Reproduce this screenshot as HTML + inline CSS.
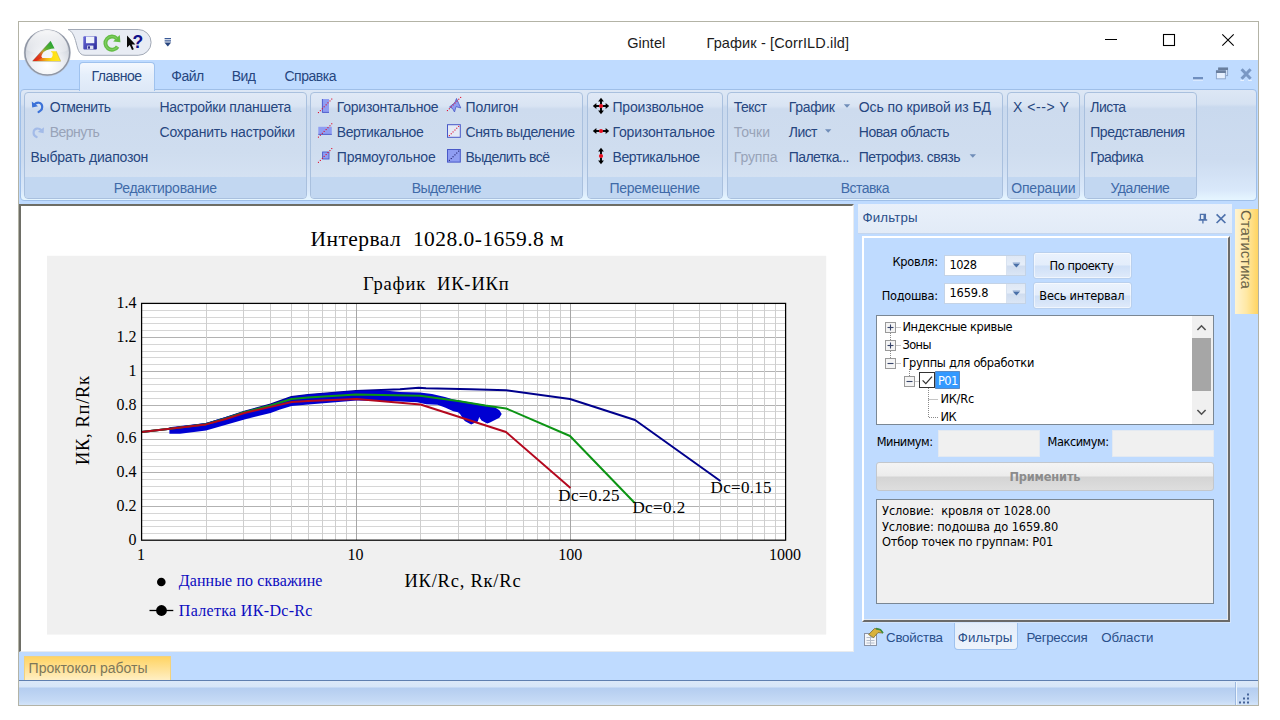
<!DOCTYPE html>
<html lang="ru">
<head>
<meta charset="utf-8">
<title>Gintel - График - [CorrILD.ild]</title>
<style>
html,body{margin:0;padding:0;background:#fff;}
body{width:1280px;height:720px;position:relative;overflow:hidden;font-family:"Liberation Sans",sans-serif;font-size:14px;}
div,span,svg{position:absolute;box-sizing:border-box;}
.t{white-space:pre;line-height:1;}
#win{left:18px;top:21px;width:1241px;height:685px;border:1px solid #b3b3a6;background:#bfdbff;}
#titlebar{left:19px;top:22px;width:1239px;height:38px;background:#fff;}
#tabstrip{left:19px;top:60px;width:1239px;height:30px;background:#bfdbff;}
#tab-main{left:79px;top:62px;width:76px;height:29px;border:1px solid #9fc2ee;border-bottom:none;border-radius:4px 4px 0 0;background:linear-gradient(#f4f8fe,#e6effb 40%,#dde8f7);}
#ribbon{left:20px;top:89px;width:1237px;height:112px;border:1px solid #9fbfe8;border-radius:4px;background:linear-gradient(#dde7f5 0,#d6e2f2 14px,#c9d9ee 17px,#cddcf0 70px,#d9e8fa 100px,#e6f6ff 110px);}
.grp{top:92px;height:107px;border:1px solid #a9c0de;border-radius:4px;background:linear-gradient(#e0e9f6 0,#d9e4f3 13px,#cddbee 16px,#cfddef 60px,#d4e1f2 84px);overflow:hidden;}
.grp i{position:absolute;left:0;right:0;bottom:0;height:21px;background:#c2d7f1;}
#mdi{left:19px;top:204px;width:835px;height:448px;background:#fff;border-left:2px solid #6e6e66;border-top:2px solid #6e6e66;border-right:2px solid #e9ecef;border-bottom:1px solid #e9ecef;}
#fhead{left:858px;top:204px;width:374px;height:30px;background:linear-gradient(#e9f0fa,#e2ebf7);border-bottom:1px solid #c5d6ee;}
#fbody{left:858px;top:234px;width:374px;height:418px;background:#bfdbff;}
#finner{left:862px;top:236px;width:368px;height:386px;border-top:2px solid #fff;border-left:2px solid #fff;border-right:2px solid #6a6a6a;border-bottom:2px solid #6a6a6a;background:#bfdbff;box-shadow:inset -1px -1px 0 #e6eaf0,1px 1px 0 #d3e4fb;}
.combo{background:#fff;border:1px solid #c4d3e6;}
.combo b{position:absolute;right:0;top:0;bottom:0;width:18px;background:linear-gradient(#dfe8f5,#e6eef9 48%,#cfdcef 52%,#dbe6f5);border-left:1px solid #d8e2f0;}
.btn{border:1px solid #b9d0ee;border-radius:3px;background:linear-gradient(#eaf2fd 0,#e3edfb 48%,#cfe0f7 52%,#dfeafa 100%);box-shadow:0 0 0 1px rgba(255,255,255,.55) inset;}
.edit{background:#f0f0f0;border:1px solid #e3e9f1;}
#tree{left:876px;top:315px;width:338px;height:110px;background:#fff;border:1px solid #7a8794;}
#sb{left:1192px;top:316px;width:21px;height:108px;background:#f0f0f0;}
#sbthumb{left:1192px;top:338px;width:19px;height:53px;background:#a6a6a6;}
#apply{left:876px;top:462px;width:338px;height:29px;border:1px solid #c3c7cc;border-radius:3px;background:linear-gradient(#f4f4f4 0,#ececec 48%,#d4d4d4 52%,#dedede 100%);}
#memo{left:876px;top:499px;width:338px;height:105px;background:#f0f0f0;border:1px solid #7a8794;}
#ftab{left:954px;top:623px;width:64px;height:27px;border:1px solid #9fc2ee;border-top:none;border-radius:0 0 4px 4px;background:linear-gradient(#e3edfa,#eef4fc);}
#stat{left:1235px;top:209px;width:23px;height:105px;background:linear-gradient(90deg,#fff4d2,#ffe8a4 50%,#ffd461);}
#stat span{left:2px;top:1px;transform-origin:0 0;transform:translate(17px,0) rotate(90deg);font-size:15px;color:#6a6348;white-space:pre;line-height:1;}
#ptab{left:24px;top:656px;width:147px;height:25px;background:linear-gradient(#ffd464,#ffe39a 55%,#fff0c8);border:1px solid #f3d27c;border-bottom:none;}
#status{left:19px;top:680px;width:1239px;height:25px;background:linear-gradient(#5f7fb0 0,#5f7fb0 1px,#dbe8f9 1px,#d6e5f8 7px,#b4cdf0 8px,#c4d9f5 20px,#d3e4f9 25px);}
#status i{position:absolute;left:1216px;top:2px;width:1px;height:23px;background:#9db9e0;box-shadow:1px 0 0 #eef5fd;}
</style>
</head>
<body>
<div id="win"></div>
<div id="titlebar"></div>
<div id="tabstrip"></div>
<div id="ribbon"></div>
<div id="tab-main"></div>
<div class="grp" style="left:24px;width:283px"><i></i></div>
<div class="grp" style="left:310px;width:273px"><i></i></div>
<div class="grp" style="left:587px;width:136px"><i></i></div>
<div class="grp" style="left:727px;width:276px"><i></i></div>
<div class="grp" style="left:1007px;width:73px"><i></i></div>
<div class="grp" style="left:1084px;width:113px"><i></i></div>
<div id="mdi"></div>
<svg id="chart" style="left:21px;top:206px" width="832" height="445" viewBox="21 206 832 445" font-family="'Liberation Serif', serif">
<rect x="21" y="206" width="832" height="445" fill="#fff"/>
<rect x="47" y="255.8" width="779.2" height="378.8" fill="#f0f0f0"/>
<rect x="141.6" y="303.4" width="644.0" height="236.80000000000007" fill="#fff"/>
<g stroke-width="1" fill="none" shape-rendering="crispEdges"><path d="M141.6 533.5H785.6" stroke="#d6d6d6"/><path d="M141.6 526.5H785.6" stroke="#d6d6d6"/><path d="M141.6 520.5H785.6" stroke="#d6d6d6"/><path d="M141.6 513.5H785.6" stroke="#d6d6d6"/><path d="M141.6 506.5H785.6" stroke="#b2b2b2"/><path d="M141.6 499.5H785.6" stroke="#d6d6d6"/><path d="M141.6 493.5H785.6" stroke="#d6d6d6"/><path d="M141.6 486.5H785.6" stroke="#d6d6d6"/><path d="M141.6 479.5H785.6" stroke="#d6d6d6"/><path d="M141.6 472.5H785.6" stroke="#b2b2b2"/><path d="M141.6 466.5H785.6" stroke="#d6d6d6"/><path d="M141.6 459.5H785.6" stroke="#d6d6d6"/><path d="M141.6 452.5H785.6" stroke="#d6d6d6"/><path d="M141.6 445.5H785.6" stroke="#d6d6d6"/><path d="M141.6 439.5H785.6" stroke="#b2b2b2"/><path d="M141.6 432.5H785.6" stroke="#d6d6d6"/><path d="M141.6 425.5H785.6" stroke="#d6d6d6"/><path d="M141.6 418.5H785.6" stroke="#d6d6d6"/><path d="M141.6 411.5H785.6" stroke="#d6d6d6"/><path d="M141.6 405.5H785.6" stroke="#b2b2b2"/><path d="M141.6 398.5H785.6" stroke="#d6d6d6"/><path d="M141.6 391.5H785.6" stroke="#d6d6d6"/><path d="M141.6 384.5H785.6" stroke="#d6d6d6"/><path d="M141.6 378.5H785.6" stroke="#d6d6d6"/><path d="M141.6 371.5H785.6" stroke="#b2b2b2"/><path d="M141.6 364.5H785.6" stroke="#d6d6d6"/><path d="M141.6 357.5H785.6" stroke="#d6d6d6"/><path d="M141.6 351.5H785.6" stroke="#d6d6d6"/><path d="M141.6 344.5H785.6" stroke="#d6d6d6"/><path d="M141.6 337.5H785.6" stroke="#b2b2b2"/><path d="M141.6 330.5H785.6" stroke="#d6d6d6"/><path d="M141.6 323.5H785.6" stroke="#d6d6d6"/><path d="M141.6 317.5H785.6" stroke="#d6d6d6"/><path d="M141.6 310.5H785.6" stroke="#d6d6d6"/><path d="M206.5 303.4V540.2" stroke="#cecece"/><path d="M243.5 303.4V540.2" stroke="#cecece"/><path d="M270.5 303.4V540.2" stroke="#cecece"/><path d="M291.5 303.4V540.2" stroke="#cecece"/><path d="M308.5 303.4V540.2" stroke="#cecece"/><path d="M322.5 303.4V540.2" stroke="#cecece"/><path d="M335.5 303.4V540.2" stroke="#cecece"/><path d="M346.5 303.4V540.2" stroke="#cecece"/><path d="M356.5 303.4V540.2" stroke="#a6a6a6"/><path d="M420.5 303.4V540.2" stroke="#cecece"/><path d="M458.5 303.4V540.2" stroke="#cecece"/><path d="M485.5 303.4V540.2" stroke="#cecece"/><path d="M506.5 303.4V540.2" stroke="#cecece"/><path d="M523.5 303.4V540.2" stroke="#cecece"/><path d="M537.5 303.4V540.2" stroke="#cecece"/><path d="M549.5 303.4V540.2" stroke="#cecece"/><path d="M560.5 303.4V540.2" stroke="#cecece"/><path d="M570.5 303.4V540.2" stroke="#a6a6a6"/><path d="M635.5 303.4V540.2" stroke="#cecece"/><path d="M673.5 303.4V540.2" stroke="#cecece"/><path d="M699.5 303.4V540.2" stroke="#cecece"/><path d="M720.5 303.4V540.2" stroke="#cecece"/><path d="M737.5 303.4V540.2" stroke="#cecece"/><path d="M752.5 303.4V540.2" stroke="#cecece"/><path d="M764.5 303.4V540.2" stroke="#cecece"/><path d="M775.5 303.4V540.2" stroke="#cecece"/></g>
<polyline fill="none" stroke="#00008c" stroke-width="2.0" stroke-linejoin="round" opacity="1" points="141.5,432 170,428.75 206,424 225,418.2 244.4,411.6 270.6,404.4 291.5,397 308,395 356,391 400,389.2 418.7,387.8 426,388.3 471,389.2 506,390.2 570,399 635,420 720.4,481"/>
<polygon fill="#0000d2" points="169.4,427.25 206,423 244.4,411.25 270.6,404.4 291.5,396.8 308.4,394.6 356.5,390.8 385,390.5 400,392 420,392.5 432,394 445,397 453.4,399.5 493.7,406.5 499.4,410.3 501.7,414 499.4,417.8 490,422.5 487.2,423.4 481.5,420.6 479.2,416.9 477.8,421.5 471.2,424.4 464.7,421 460,414 458,412.2 453.4,411.2 445,407.5 437.5,404.7 426.2,404.2 417,402.3 400,401.4 356.5,400.6 308.4,404.5 291.5,406 280,409.4 270.6,413 244.4,419.4 206,430.6 180,433.75 169.4,433.75"/>
<polyline fill="none" stroke="#0c9414" stroke-width="2.0" stroke-linejoin="round" opacity="1" points="141.5,432 170,428.75 206,424.2 225,418.6 244.4,412.2 270.6,405.4 291.5,399 308,397.5 356,394.6 420,395.7 458,401 485.3,405.6 506,408.4 570,436 634.5,502.7"/>
<polyline fill="none" stroke="#b4081e" stroke-width="2.0" stroke-linejoin="round" opacity="1" points="141.5,432 170,428.75 206,424.4 225,419.2 244.4,413 270.6,406.9 291.9,402 308,401 356.5,399 400,402.8 420.5,404.5 506,432 570.5,488"/>
<rect x="141.6" y="303.4" width="644.0" height="236.80000000000007" fill="none" stroke="#000" stroke-width="1.25"/>
<text x="310.5" y="245.5" font-size="21.5" text-anchor="start" fill="#000" xml:space="preserve" textLength="253.2" lengthAdjust="spacing">Интервал  1028.0-1659.8 м</text>
<text x="363" y="289.5" font-size="18.5" text-anchor="start" fill="#000" xml:space="preserve" textLength="145.7" lengthAdjust="spacing">График  ИК-ИКп</text>
<text x="136.5" y="308.0" font-size="16" text-anchor="end" fill="#000" xml:space="preserve">1.4</text>
<text x="136.5" y="341.8" font-size="16" text-anchor="end" fill="#000" xml:space="preserve">1.2</text>
<text x="136.5" y="375.7" font-size="16" text-anchor="end" fill="#000" xml:space="preserve">1</text>
<text x="136.5" y="409.5" font-size="16" text-anchor="end" fill="#000" xml:space="preserve">0.8</text>
<text x="136.5" y="443.3" font-size="16" text-anchor="end" fill="#000" xml:space="preserve">0.6</text>
<text x="136.5" y="477.1" font-size="16" text-anchor="end" fill="#000" xml:space="preserve">0.4</text>
<text x="136.5" y="511.0" font-size="16" text-anchor="end" fill="#000" xml:space="preserve">0.2</text>
<text x="136.5" y="544.8" font-size="16" text-anchor="end" fill="#000" xml:space="preserve">0</text>
<text x="140.9" y="560" font-size="16" text-anchor="middle" fill="#000" xml:space="preserve">1</text>
<text x="355.6" y="560" font-size="16" text-anchor="middle" fill="#000" xml:space="preserve">10</text>
<text x="570.2" y="560" font-size="16" text-anchor="middle" fill="#000" xml:space="preserve">100</text>
<text x="784.9" y="560" font-size="16" text-anchor="middle" fill="#000" xml:space="preserve">1000</text>
<text x="404.4" y="586.7" font-size="18.5" text-anchor="start" fill="#000" xml:space="preserve" textLength="116.2" lengthAdjust="spacing">ИК/Rc, Rк/Rc</text>
<text transform="translate(88.6,465) rotate(-90)" font-size="18.5" fill="#000" textLength="89" lengthAdjust="spacing">ИК, Rп/Rк</text>
<text x="558.3" y="500.6" font-size="17" text-anchor="start" fill="#000" xml:space="preserve" textLength="61.3" lengthAdjust="spacing">Dc=0.25</text>
<text x="632.4" y="513.2" font-size="17" text-anchor="start" fill="#000" xml:space="preserve" textLength="52.8" lengthAdjust="spacing">Dc=0.2</text>
<text x="710.6" y="493" font-size="17" text-anchor="start" fill="#000" xml:space="preserve" textLength="61.0" lengthAdjust="spacing">Dc=0.15</text>
<circle cx="161.3" cy="582" r="4.3" fill="#000"/>
<text x="178.75" y="586.3" font-size="16" text-anchor="start" fill="#0c0cc0" xml:space="preserve" textLength="143.7" lengthAdjust="spacing">Данные по скважине</text>
<path d="M149.5 610.5H173.3" stroke="#000" stroke-width="1.3"/><circle cx="161.5" cy="610.5" r="5.4" fill="#000"/>
<text x="178.75" y="615.5" font-size="16" text-anchor="start" fill="#0c0cc0" xml:space="preserve" textLength="133.7" lengthAdjust="spacing">Палетка ИК-Dc-Rc</text>
</svg>
<div id="fhead"></div>
<div id="fbody"></div>
<div id="finner"></div>
<div class="combo" style="left:944px;top:255px;width:82px;height:21px"><b></b></div>
<div class="combo" style="left:944px;top:283px;width:82px;height:21px"><b></b></div>
<div class="btn" style="left:1033px;top:252px;width:99px;height:27px"></div>
<div class="btn" style="left:1033px;top:282px;width:99px;height:27px"></div>
<div id="tree"></div>
<div id="sb"></div>
<div id="sbthumb"></div>
<div class="edit" style="left:938px;top:430px;width:102px;height:27px"></div>
<div class="edit" style="left:1112px;top:430px;width:102px;height:27px"></div>
<div id="apply"></div>
<div id="memo"></div>
<div id="ftab"></div>
<div id="stat"><span>Статистика</span></div>
<div id="ptab"></div>
<div id="status"><i></i></div>
<svg id="icons" style="left:0;top:0" width="1280" height="720" viewBox="0 0 1280 720">
<defs>
<radialGradient id="abg" cx="50%" cy="78%" r="75%"><stop offset="0" stop-color="#ffffff"/><stop offset="0.45" stop-color="#eef0f4"/><stop offset="0.75" stop-color="#d4d8e0"/><stop offset="1" stop-color="#c3c8d2"/></radialGradient>
<linearGradient id="abtop" x1="0" y1="0" x2="0" y2="1"><stop offset="0" stop-color="#fff" stop-opacity=".9"/><stop offset="1" stop-color="#fff" stop-opacity=".15"/></linearGradient>
<linearGradient id="lg1" x1="0" y1="1" x2="1" y2="0"><stop offset="0" stop-color="#e02010"/><stop offset="0.3" stop-color="#e04020"/><stop offset="0.48" stop-color="#c0a030"/><stop offset="0.6" stop-color="#60b030"/><stop offset="1" stop-color="#10a038"/></linearGradient>
<linearGradient id="lg2" x1="0" y1="0" x2="1" y2="0"><stop offset="0" stop-color="#e23818"/><stop offset="0.4" stop-color="#f0b018"/><stop offset="0.65" stop-color="#ffe010"/><stop offset="1" stop-color="#ffe628"/></linearGradient>
<linearGradient id="sv" x1="0" y1="0" x2="1" y2="1"><stop offset="0" stop-color="#6a6ad8"/><stop offset="1" stop-color="#2a2a98"/></linearGradient>
</defs>
<path d="M68 29.5H138.2a12.9 12.9 0 0 1 0 25.8H85C78 55.3 77.5 47 75.5 40.5C74 35.5 72 31 68 29.5Z" fill="#e8ecf4" stroke="#a2a9b6" stroke-width="1"/>
<circle cx="47.3" cy="52.9" r="23.6" fill="#bcc2cd" opacity=".6"/>
<circle cx="47.3" cy="52.6" r="22.4" fill="url(#abg)" stroke="#8f96a4" stroke-width="1.5"/>
<path d="M27 50a20.3 20.3 0 0 1 40.6 0C60 55 35 55 27 50Z" fill="url(#abtop)"/>
<path d="M32.6 61L50.7 41L54.6 48.4C51 48.2 47 49.6 44.4 51.4C42.6 52.8 41.6 54.6 41.4 56.8L42.6 58.2L43 61Z" fill="url(#lg1)"/>
<path d="M41.6 58H51.3L52.6 56V52.7L51.1 52V51.2H56.3L60.7 61.1H36Z" fill="url(#lg2)"/>
<path d="M32.4 61.2L50.6 41" stroke="#5a5a40" stroke-width=".6" opacity=".55"/><path d="M32.6 61.3H60.8" stroke="#8a7a30" stroke-width=".6" opacity=".7"/><path d="M56.3 51.2L60.7 61.1" stroke="#8a7a30" stroke-width=".5" opacity=".6"/>
<rect x="83.3" y="36.2" width="13.6" height="13.4" rx="1" fill="url(#sv)"/><rect x="86" y="36.6" width="8.3" height="6.6" fill="#eef2fb"/><rect x="87.2" y="45.6" width="6.2" height="3.6" fill="#dfe3f2"/><rect x="88" y="46.3" width="2" height="2.4" fill="#30308c"/>
<path d="M117.6 46.6A6.6 6.6 0 1 1 116.8 38.6" fill="none" stroke="#63bd45" stroke-width="3.9"/><path d="M113.2 41.6L120.4 42.2L119.8 35Z" fill="#63bd45"/>
<path d="M117.6 46.6A6.6 6.6 0 1 1 116.8 38.6" fill="none" stroke="#9fe07f" stroke-width="1.2" opacity=".45"/>
<path d="M127 35.6V47.6L129.8 45L132 50L133.8 49.2L131.7 44.4H135.4Z" fill="#0a0a0a"/>
<text x="132.4" y="48.4" font-family="'Liberation Sans',sans-serif" font-weight="bold" font-size="17.5" fill="#10108a">?</text>
<path d="M164.6 38.6H171M164.6 40.8H171" stroke="#3a5a96" stroke-width="1.3"/><path d="M164.4 42.6H171.2L167.8 46.6Z" fill="#27457f"/>
<path d="M1105 39.5H1117" stroke="#000" stroke-width="1"/>
<rect x="1163.5" y="34.5" width="11" height="11" fill="none" stroke="#000" stroke-width="1.1"/>
<path d="M1222.3 34.3L1233.7 45.7M1233.7 34.3L1222.3 45.7" stroke="#000" stroke-width="1.1"/>
<rect x="1193" y="77" width="10" height="2.6" fill="#6f8fc0"/><rect x="1193" y="79.6" width="10" height="1" fill="#eaf2ff"/>
<rect x="1218.6" y="68" width="9" height="7.6" fill="#cfdff5" stroke="#8fa8cc" stroke-width="1"/><rect x="1218.2" y="67.6" width="9.8" height="2.4" fill="#6a7f9e"/>
<rect x="1216.4" y="70.8" width="9" height="8" fill="#e6f0ff" stroke="#8fa8cc" stroke-width="1"/><rect x="1216" y="70.4" width="9.8" height="2.6" fill="#6a7f9e"/>
<path d="M1241.6 69.2L1250.6 78.8M1250.6 69.2L1241.6 78.8" stroke="#7a98c4" stroke-width="3"/><path d="M1240.4 80.4H1244M1248.2 80.4H1251.8" stroke="#eef5ff" stroke-width="1"/>
<path d="M34.2 104.6C37 101.8 41 102.2 42 105.4C42.8 108.2 41 110.8 38.6 112" fill="none" stroke="#3c72d8" stroke-width="2.2" stroke-linecap="round"/><path d="M31.8 101.4L32.2 107.4L38 106.2Z" fill="#3c72d8"/>
<path d="M41.6 130.4C38.8 127.6 34.8 128 33.8 131.2C33 134 34.6 136 36.6 137" fill="none" stroke="#a3bbe8" stroke-width="2.2" stroke-linecap="round"/><path d="M44 127.2L43.6 133.2L37.8 132Z" fill="#a3bbe8"/>
<rect x="322" y="99" width="7" height="13.8" fill="#8f9df2"/><path d="M322.4 99V112.4H329" fill="none" stroke="#4858c8" stroke-width=".9"/><rect x="317.9" y="112.0" width="1.1" height="1.1" fill="#e01030"/><rect x="319.8" y="110.1" width="1.1" height="1.1" fill="#e01030"/><rect x="321.8" y="108.2" width="1.1" height="1.1" fill="#e01030"/><rect x="323.6" y="106.2" width="1.1" height="1.1" fill="#e01030"/><rect x="325.6" y="104.3" width="1.1" height="1.1" fill="#e01030"/><rect x="327.4" y="102.3" width="1.1" height="1.1" fill="#e01030"/><rect x="329.4" y="100.4" width="1.1" height="1.1" fill="#e01030"/><rect x="331.2" y="98.5" width="1.1" height="1.1" fill="#e01030"/>
<rect x="318.3" y="126.8" width="13.5" height="7.8" fill="#8f9df2"/><path d="M318.3 134.4H331.8" stroke="#4858c8" stroke-width=".9"/><rect x="317.9" y="136.6" width="1.1" height="1.1" fill="#e01030"/><rect x="319.8" y="134.7" width="1.1" height="1.1" fill="#e01030"/><rect x="321.8" y="132.8" width="1.1" height="1.1" fill="#e01030"/><rect x="323.6" y="130.9" width="1.1" height="1.1" fill="#e01030"/><rect x="325.6" y="129.0" width="1.1" height="1.1" fill="#e01030"/><rect x="327.4" y="127.1" width="1.1" height="1.1" fill="#e01030"/><rect x="329.4" y="125.2" width="1.1" height="1.1" fill="#e01030"/><rect x="331.2" y="123.2" width="1.1" height="1.1" fill="#e01030"/>
<rect x="322.6" y="152" width="6.4" height="7" fill="#8f9df2" stroke="#4858c8" stroke-width=".9"/><rect x="317.9" y="161.8" width="1.1" height="1.1" fill="#e01030"/><rect x="319.8" y="159.9" width="1.1" height="1.1" fill="#e01030"/><rect x="321.8" y="157.9" width="1.1" height="1.1" fill="#e01030"/><rect x="323.6" y="155.9" width="1.1" height="1.1" fill="#e01030"/><rect x="325.6" y="154.0" width="1.1" height="1.1" fill="#e01030"/><rect x="327.4" y="152.0" width="1.1" height="1.1" fill="#e01030"/><rect x="329.4" y="150.0" width="1.1" height="1.1" fill="#e01030"/><rect x="331.2" y="148.0" width="1.1" height="1.1" fill="#e01030"/>
<path d="M449.5 107L455 102.5L456.5 98.5L458.6 103.2L460.8 108L456 106.6L454.5 112L452.5 108.4Z" fill="#8f9df2" stroke="#4858c8" stroke-width=".8"/><rect x="446.9" y="110.0" width="1.1" height="1.1" fill="#e01030"/><rect x="448.8" y="108.2" width="1.1" height="1.1" fill="#e01030"/><rect x="450.7" y="106.3" width="1.1" height="1.1" fill="#e01030"/><rect x="452.6" y="104.4" width="1.1" height="1.1" fill="#e01030"/><rect x="454.4" y="102.5" width="1.1" height="1.1" fill="#e01030"/><rect x="456.3" y="100.6" width="1.1" height="1.1" fill="#e01030"/><rect x="458.2" y="98.7" width="1.1" height="1.1" fill="#e01030"/><rect x="460.1" y="96.9" width="1.1" height="1.1" fill="#e01030"/>
<rect x="447.5" y="124.7" width="12.8" height="12.6" fill="#e4eaf6" stroke="#4858c8" stroke-width="1"/><rect x="448.8" y="135.0" width="1.1" height="1.1" fill="#e01030"/><rect x="450.7" y="133.2" width="1.1" height="1.1" fill="#e01030"/><rect x="452.5" y="131.4" width="1.1" height="1.1" fill="#e01030"/><rect x="454.4" y="129.5" width="1.1" height="1.1" fill="#e01030"/><rect x="456.2" y="127.7" width="1.1" height="1.1" fill="#e01030"/><rect x="458.1" y="125.9" width="1.1" height="1.1" fill="#e01030"/>
<rect x="447.5" y="149.5" width="12.8" height="12.6" fill="#8f9df2" stroke="#4858c8" stroke-width="1"/><rect x="448.8" y="159.8" width="1.1" height="1.1" fill="#20206a"/><rect x="450.7" y="158.0" width="1.1" height="1.1" fill="#20206a"/><rect x="452.5" y="156.2" width="1.1" height="1.1" fill="#20206a"/><rect x="454.4" y="154.3" width="1.1" height="1.1" fill="#20206a"/><rect x="456.2" y="152.5" width="1.1" height="1.1" fill="#20206a"/><rect x="458.1" y="150.6" width="1.1" height="1.1" fill="#20206a"/>
<path d="M602.5 106.0L606.1 106.0" stroke="#000" stroke-width="1.9"/><path d="M609.2 106.0L605.6 108.9L605.6 103.1Z" fill="#000"/><path d="M599.5 106.0L595.9 106.0" stroke="#000" stroke-width="1.9"/><path d="M592.8 106.0L596.4 103.1L596.4 108.9Z" fill="#000"/><path d="M601.0 107.5L601.0 111.1" stroke="#000" stroke-width="1.9"/><path d="M601.0 114.2L598.1 110.6L603.9 110.6Z" fill="#000"/><path d="M601.0 104.5L601.0 100.9" stroke="#000" stroke-width="1.9"/><path d="M601.0 97.8L603.9 101.4L598.1 101.4Z" fill="#000"/><circle cx="601" cy="106" r="2.1" fill="#e81020"/>
<path d="M602.5 131.0L606.1 131.0" stroke="#000" stroke-width="1.9"/><path d="M609.2 131.0L605.6 133.9L605.6 128.1Z" fill="#000"/><path d="M599.5 131.0L595.9 131.0" stroke="#000" stroke-width="1.9"/><path d="M592.8 131.0L596.4 128.1L596.4 133.9Z" fill="#000"/><circle cx="601" cy="131" r="2.1" fill="#e81020"/>
<path d="M601.0 157.5L601.0 161.1" stroke="#000" stroke-width="1.9"/><path d="M601.0 164.2L598.1 160.6L603.9 160.6Z" fill="#000"/><path d="M601.0 154.5L601.0 150.9" stroke="#000" stroke-width="1.9"/><path d="M601.0 147.8L603.9 151.4L598.1 151.4Z" fill="#000"/><circle cx="601" cy="156" r="2.1" fill="#e81020"/>
<path d="M843.8 104.2H850.1999999999999L847.0 107.8Z" fill="#6f8db8"/>
<path d="M825 129.2H831.4L828.2 132.79999999999998Z" fill="#6f8db8"/>
<path d="M969.6 154.2H976.0L972.8000000000001 157.79999999999998Z" fill="#6f8db8"/>
<path d="M1012.7 263.4H1020.1L1016.4 267.59999999999997Z" fill="#4a70a8"/><path d="M1012.7 262.5H1020.1" stroke="#a9bfdf" stroke-width=".8"/>
<path d="M1012.7 291.4H1020.1L1016.4 295.59999999999997Z" fill="#4a70a8"/><path d="M1012.7 290.5H1020.1" stroke="#a9bfdf" stroke-width=".8"/>
<path d="M1200.4 214.4H1205.4V219.6H1200.4ZM1198.6 220H1207.2M1202.9 220V223.4" fill="none" stroke="#4f72ac" stroke-width="1.3"/><path d="M1204.3 214.4V219.6" stroke="#4f72ac" stroke-width="1.6"/>
<path d="M1216.6 214.4L1225.4 223M1225.4 214.4L1216.6 223" stroke="#4f72ac" stroke-width="1.7"/>
<rect x="885.5" y="322.5" width="10" height="10" fill="#f4f4f4" stroke="#9a9a9a" stroke-width="1"/><path d="M887.5 327.5H893.5" stroke="#38456a" stroke-width="1.1"/><path d="M890.5 324.5V330.5" stroke="#38456a" stroke-width="1.1"/><rect x="885.5" y="340.5" width="10" height="10" fill="#f4f4f4" stroke="#9a9a9a" stroke-width="1"/><path d="M887.5 345.5H893.5" stroke="#38456a" stroke-width="1.1"/><path d="M890.5 342.5V348.5" stroke="#38456a" stroke-width="1.1"/><rect x="885.5" y="358.5" width="10" height="10" fill="#f4f4f4" stroke="#9a9a9a" stroke-width="1"/><path d="M887.5 363.5H893.5" stroke="#38456a" stroke-width="1.1"/><rect x="904.5" y="376.5" width="10" height="10" fill="#f4f4f4" stroke="#9a9a9a" stroke-width="1"/><path d="M906.5 381.5H912.5" stroke="#38456a" stroke-width="1.1"/>
<g stroke="#8a8a8a" stroke-width="1" stroke-dasharray="1 1" fill="none"><path d="M890.5 333V340M890.5 351V358M896.5 327.5H901M896.5 345.5H901M896.5 363.5H901M909.5 369V376M915.5 381.5H919M928.5 388V417.5H938M928.5 399.5H938"/></g>
<rect x="919.5" y="372.5" width="15" height="15" fill="#fff" stroke="#333" stroke-width="1"/><path d="M922.6 380.4L925.8 383.6L932 376.6" fill="none" stroke="#333" stroke-width="1.3"/>
<rect x="935.5" y="371.5" width="24" height="17" fill="#3399ff" stroke="#1c4a8a" stroke-width="1" stroke-dasharray="1 1"/>
<path d="M1197.4 330L1201.5 325.8L1205.6 330" fill="none" stroke="#505050" stroke-width="1.6"/><path d="M1197.4 410L1201.5 414.2L1205.6 410" fill="none" stroke="#505050" stroke-width="1.6"/>
<rect x="864.5" y="633.5" width="12" height="12" fill="#f4f6fa" stroke="#8a93a6" stroke-width="1"/><path d="M866.5 637.5H874.5M866.5 640.5H874.5M866.5 643H874.5M870.5 635.5V645" stroke="#b4bccb" stroke-width="1"/><path d="M868.6 634.6L874.6 628.4L880.4 629.6L883 633L878 632.6L873.6 637.6Z" fill="#d9b23c" stroke="#7a6a2a" stroke-width=".8"/><path d="M876 628.6L880.4 629.6L883 633" fill="none" stroke="#3d8a3d" stroke-width="1.6"/>
<rect x="1247" y="693.5" width="2" height="2" fill="#46649a"/>
<rect x="1247" y="697.5" width="2" height="2" fill="#46649a"/>
<rect x="1247" y="701.5" width="2" height="2" fill="#46649a"/>
<rect x="1243" y="697.5" width="2" height="2" fill="#46649a"/>
<rect x="1243" y="701.5" width="2" height="2" fill="#46649a"/>
<rect x="1239" y="701.5" width="2" height="2" fill="#46649a"/>
</svg>
<span class="t" style="left:627.30px;top:35.53px;font-size:14.5px;color:#1c1c1c;letter-spacing:0.002px;">Gintel</span>
<span class="t" style="left:706.50px;top:35.53px;font-size:14.5px;color:#1c1c1c;letter-spacing:0.129px;">График - [CorrILD.ild]</span>
<span class="t" style="left:91.60px;top:68.95px;font-size:14px;color:#26467f;letter-spacing:-0.517px;">Главное</span>
<span class="t" style="left:171.30px;top:68.95px;font-size:14px;color:#26467f;letter-spacing:-0.550px;">Файл</span>
<span class="t" style="left:231.80px;top:68.95px;font-size:14px;color:#26467f;letter-spacing:-0.550px;">Вид</span>
<span class="t" style="left:284.50px;top:68.95px;font-size:14px;color:#26467f;letter-spacing:-0.487px;">Справка</span>
<span class="t" style="left:49.80px;top:99.75px;font-size:14px;color:#26467f;letter-spacing:-0.383px;">Отменить</span>
<span class="t" style="left:49.80px;top:124.85px;font-size:14px;color:#98a3b8;letter-spacing:-0.550px;">Вернуть</span>
<span class="t" style="left:30.50px;top:149.85px;font-size:14px;color:#26467f;letter-spacing:-0.220px;">Выбрать диапозон</span>
<span class="t" style="left:159.50px;top:99.75px;font-size:14px;color:#26467f;letter-spacing:-0.274px;">Настройки планшета</span>
<span class="t" style="left:159.50px;top:124.85px;font-size:14px;color:#26467f;letter-spacing:-0.235px;">Сохранить настройки</span>
<span class="t" style="left:336.75px;top:99.75px;font-size:14px;color:#26467f;letter-spacing:-0.221px;">Горизонтальное</span>
<span class="t" style="left:336.75px;top:124.85px;font-size:14px;color:#26467f;letter-spacing:-0.439px;">Вертикальное</span>
<span class="t" style="left:336.75px;top:149.85px;font-size:14px;color:#26467f;letter-spacing:-0.132px;">Прямоугольное</span>
<span class="t" style="left:465.50px;top:99.75px;font-size:14px;color:#26467f;letter-spacing:-0.185px;">Полигон</span>
<span class="t" style="left:465.50px;top:124.85px;font-size:14px;color:#26467f;letter-spacing:-0.415px;">Снять выделение</span>
<span class="t" style="left:465.50px;top:149.85px;font-size:14px;color:#26467f;letter-spacing:-0.550px;">Выделить всё</span>
<span class="t" style="left:612.50px;top:99.75px;font-size:14px;color:#26467f;letter-spacing:-0.196px;">Произвольное</span>
<span class="t" style="left:612.50px;top:124.85px;font-size:14px;color:#26467f;letter-spacing:-0.163px;">Горизонтальное</span>
<span class="t" style="left:612.50px;top:149.85px;font-size:14px;color:#26467f;letter-spacing:-0.393px;">Вертикальное</span>
<span class="t" style="left:733.75px;top:99.75px;font-size:14px;color:#26467f;letter-spacing:-0.550px;">Текст</span>
<span class="t" style="left:733.75px;top:124.85px;font-size:14px;color:#98a3b8;letter-spacing:0.016px;">Точки</span>
<span class="t" style="left:733.75px;top:149.85px;font-size:14px;color:#98a3b8;letter-spacing:-0.125px;">Группа</span>
<span class="t" style="left:788.75px;top:99.75px;font-size:14px;color:#26467f;letter-spacing:-0.319px;">График</span>
<span class="t" style="left:788.75px;top:124.85px;font-size:14px;color:#26467f;letter-spacing:-0.550px;">Лист</span>
<span class="t" style="left:788.75px;top:149.85px;font-size:14px;color:#26467f;letter-spacing:-0.550px;">Палетка...</span>
<span class="t" style="left:858.75px;top:99.75px;font-size:14px;color:#26467f;letter-spacing:-0.077px;">Ось по кривой из БД</span>
<span class="t" style="left:858.75px;top:124.85px;font-size:14px;color:#26467f;letter-spacing:-0.461px;">Новая область</span>
<span class="t" style="left:858.75px;top:149.85px;font-size:14px;color:#26467f;letter-spacing:-0.481px;">Петрофиз. связь</span>
<span class="t" style="left:1013.00px;top:99.75px;font-size:14px;color:#26467f;letter-spacing:0.551px;">X &lt;--&gt; Y</span>
<span class="t" style="left:1090.30px;top:99.75px;font-size:14px;color:#26467f;letter-spacing:-0.550px;">Листа</span>
<span class="t" style="left:1090.30px;top:124.85px;font-size:14px;color:#26467f;letter-spacing:-0.487px;">Представления</span>
<span class="t" style="left:1090.30px;top:149.85px;font-size:14px;color:#26467f;letter-spacing:-0.456px;">Графика</span>
<span class="t" style="left:113.75px;top:180.75px;font-size:14px;color:#3f6aa8;letter-spacing:-0.262px;">Редактирование</span>
<span class="t" style="left:411.75px;top:180.75px;font-size:14px;color:#3f6aa8;letter-spacing:-0.550px;">Выделение</span>
<span class="t" style="left:609.50px;top:180.75px;font-size:14px;color:#3f6aa8;letter-spacing:-0.283px;">Перемещение</span>
<span class="t" style="left:840.75px;top:180.75px;font-size:14px;color:#3f6aa8;letter-spacing:-0.550px;">Вставка</span>
<span class="t" style="left:1011.25px;top:180.75px;font-size:14px;color:#3f6aa8;letter-spacing:-0.179px;">Операции</span>
<span class="t" style="left:1110.60px;top:180.75px;font-size:14px;color:#3f6aa8;letter-spacing:-0.550px;">Удаление</span>
<span class="t" style="left:862.50px;top:211.24px;font-size:13.3px;color:#2a4f8a;letter-spacing:0.128px;">Фильтры</span>
<span class="t" style="left:892.50px;top:256.15px;font-size:12.7px;color:#000;font-family:'DejaVu Sans Condensed', 'DejaVu Sans', 'Liberation Sans', sans-serif;letter-spacing:-0.263px;">Кровля:</span>
<span class="t" style="left:881.70px;top:290.05px;font-size:12.7px;color:#000;font-family:'DejaVu Sans Condensed', 'DejaVu Sans', 'Liberation Sans', sans-serif;letter-spacing:-0.310px;">Подошва:</span>
<span class="t" style="left:949.50px;top:259.05px;font-size:12.7px;color:#000;font-family:'DejaVu Sans Condensed', 'DejaVu Sans', 'Liberation Sans', sans-serif;letter-spacing:-0.550px;">1028</span>
<span class="t" style="left:949.50px;top:287.05px;font-size:12.7px;color:#000;font-family:'DejaVu Sans Condensed', 'DejaVu Sans', 'Liberation Sans', sans-serif;letter-spacing:-0.188px;">1659.8</span>
<span class="t" style="left:1049.50px;top:260.35px;font-size:12.7px;color:#000;font-family:'DejaVu Sans Condensed', 'DejaVu Sans', 'Liberation Sans', sans-serif;letter-spacing:-0.435px;">По проекту</span>
<span class="t" style="left:1039.30px;top:290.35px;font-size:12.7px;color:#000;font-family:'DejaVu Sans Condensed', 'DejaVu Sans', 'Liberation Sans', sans-serif;letter-spacing:-0.251px;">Весь интервал</span>
<span class="t" style="left:902.40px;top:321.15px;font-size:12.7px;color:#000;font-family:'DejaVu Sans Condensed', 'DejaVu Sans', 'Liberation Sans', sans-serif;letter-spacing:-0.356px;">Индексные кривые</span>
<span class="t" style="left:902.40px;top:339.35px;font-size:12.7px;color:#000;font-family:'DejaVu Sans Condensed', 'DejaVu Sans', 'Liberation Sans', sans-serif;letter-spacing:-0.550px;">Зоны</span>
<span class="t" style="left:902.40px;top:356.75px;font-size:12.7px;color:#000;font-family:'DejaVu Sans Condensed', 'DejaVu Sans', 'Liberation Sans', sans-serif;letter-spacing:-0.292px;">Группы для обработки</span>
<span class="t" style="left:938.00px;top:374.85px;font-size:12.7px;color:#fff;font-family:'DejaVu Sans Condensed', 'DejaVu Sans', 'Liberation Sans', sans-serif;letter-spacing:-0.550px;">P01</span>
<span class="t" style="left:940.40px;top:392.85px;font-size:12.7px;color:#000;font-family:'DejaVu Sans Condensed', 'DejaVu Sans', 'Liberation Sans', sans-serif;letter-spacing:-0.226px;">ИК/Rc</span>
<span class="t" style="left:940.40px;top:410.55px;font-size:12.7px;color:#000;font-family:'DejaVu Sans Condensed', 'DejaVu Sans', 'Liberation Sans', sans-serif;letter-spacing:-0.550px;">ИК</span>
<span class="t" style="left:876.70px;top:436.15px;font-size:12.7px;color:#000;font-family:'DejaVu Sans Condensed', 'DejaVu Sans', 'Liberation Sans', sans-serif;letter-spacing:-0.524px;">Минимум:</span>
<span class="t" style="left:1047.60px;top:436.15px;font-size:12.7px;color:#000;font-family:'DejaVu Sans Condensed', 'DejaVu Sans', 'Liberation Sans', sans-serif;letter-spacing:-0.483px;">Максимум:</span>
<span class="t" style="left:1009.40px;top:470.85px;font-size:12.7px;color:#8c8c8c;font-family:'DejaVu Sans Condensed', 'DejaVu Sans', 'Liberation Sans', sans-serif;font-weight:bold;letter-spacing:-0.164px;">Применить</span>
<span class="t" style="left:882.00px;top:504.85px;font-size:12.7px;color:#000;font-family:'DejaVu Sans Condensed', 'DejaVu Sans', 'Liberation Sans', sans-serif;letter-spacing:-0.056px;">Условие:  кровля от 1028.00</span>
<span class="t" style="left:882.00px;top:520.65px;font-size:12.7px;color:#000;font-family:'DejaVu Sans Condensed', 'DejaVu Sans', 'Liberation Sans', sans-serif;letter-spacing:-0.106px;">Условие: подошва до 1659.80</span>
<span class="t" style="left:882.00px;top:536.45px;font-size:12.7px;color:#000;font-family:'DejaVu Sans Condensed', 'DejaVu Sans', 'Liberation Sans', sans-serif;letter-spacing:-0.178px;">Отбор точек по группам: P01</span>
<span class="t" style="left:886.00px;top:631.44px;font-size:13.3px;color:#2a4f8a;letter-spacing:-0.199px;">Свойства</span>
<span class="t" style="left:957.80px;top:631.44px;font-size:13.3px;color:#2a4f8a;letter-spacing:0.044px;">Фильтры</span>
<span class="t" style="left:1026.50px;top:631.44px;font-size:13.3px;color:#2a4f8a;letter-spacing:-0.269px;">Регрессия</span>
<span class="t" style="left:1101.20px;top:631.44px;font-size:13.3px;color:#2a4f8a;letter-spacing:-0.081px;">Области</span>
<span class="t" style="left:28.60px;top:660.55px;font-size:14px;color:#7c775a;letter-spacing:-0.029px;">Проктокол работы</span>
</body>
</html>
